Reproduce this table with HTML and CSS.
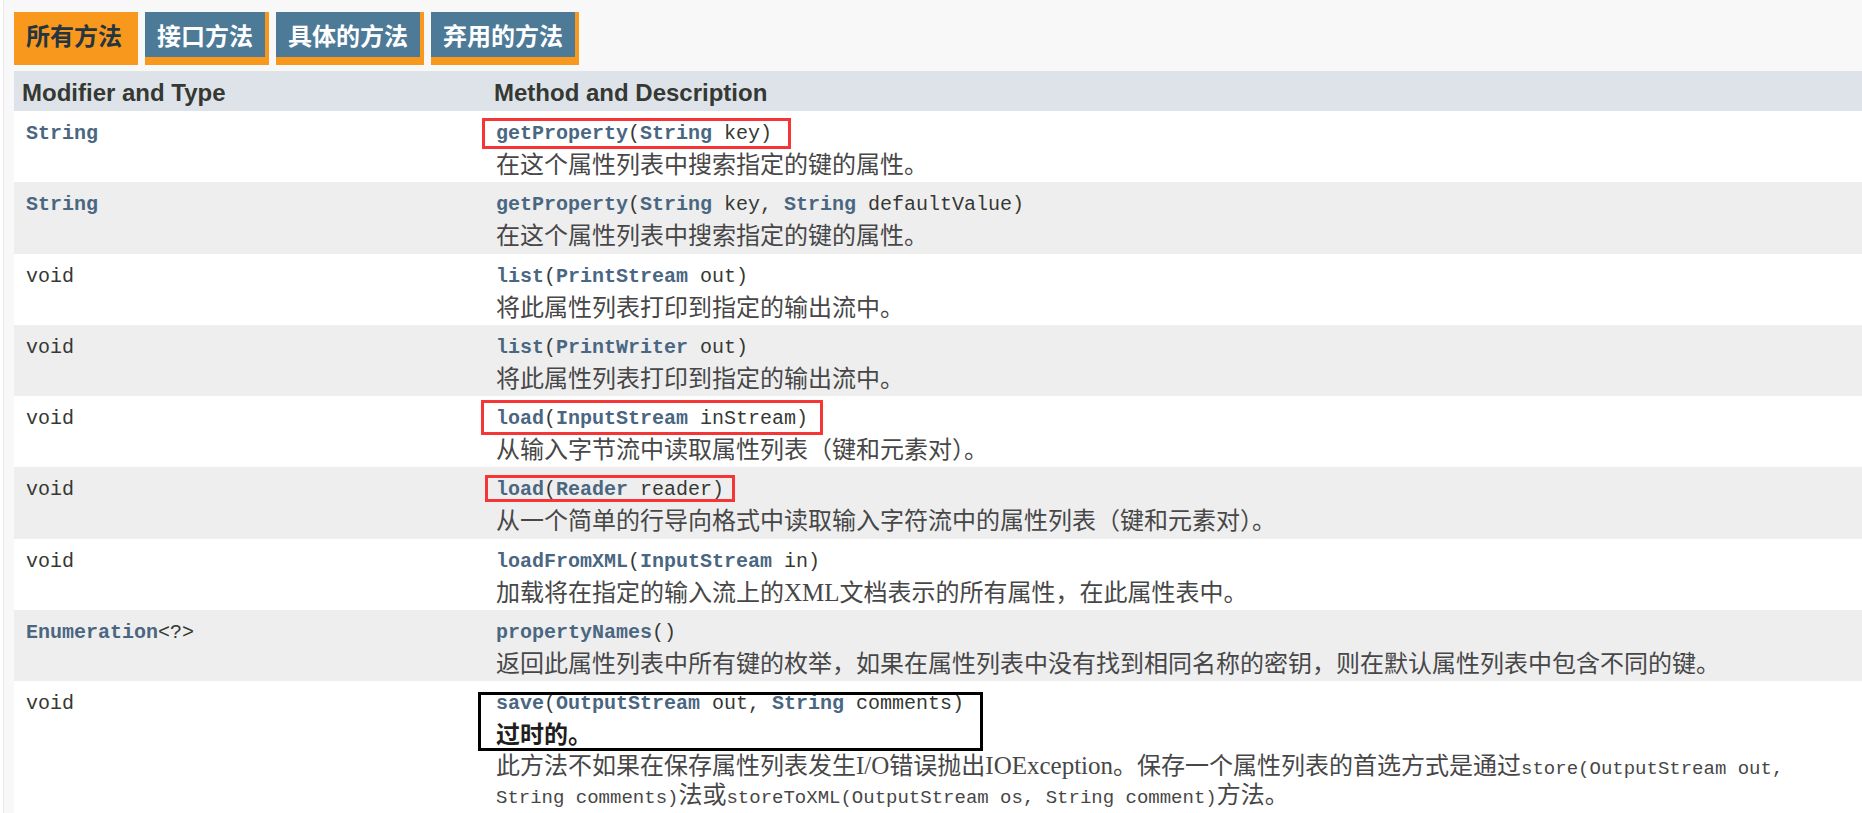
FILE: index.html
```html
<!DOCTYPE html>
<html lang="zh">
<head>
<meta charset="utf-8">
<title>Properties</title>
<link rel="stylesheet" href="styles.css">
</head>
<body>
<div class="page">
  <div class="tabs">
    <span class="tab active"><span class="tab-in">所有方法</span></span>
    <span class="tab"><span class="tab-in">接口方法</span></span>
    <span class="tab"><span class="tab-in">具体的方法</span></span>
    <span class="tab"><span class="tab-in">弃用的方法</span></span>
  </div>
  <table class="summary">
    <colgroup><col class="c1"><col class="c2"></colgroup>
    <thead>
      <tr><th>Modifier and Type</th><th>Method and Description</th></tr>
    </thead>
    <tbody>
      <tr class="alt">
        <td class="first"><code class="link">String</code></td>
        <td class="second">
          <div class="sig"><code><span class="link">getProperty</span>(<span class="link">String</span>&nbsp;key)</code><span class="mark mark-1"></span></div>
          <div class="block">在这个属性列表中搜索指定的键的属性。</div>
        </td>
      </tr>
      <tr class="row">
        <td class="first"><code class="link">String</code></td>
        <td class="second">
          <div class="sig"><code><span class="link">getProperty</span>(<span class="link">String</span>&nbsp;key, <span class="link">String</span>&nbsp;defaultValue)</code></div>
          <div class="block">在这个属性列表中搜索指定的键的属性。</div>
        </td>
      </tr>
      <tr class="alt">
        <td class="first"><code>void</code></td>
        <td class="second">
          <div class="sig"><code><span class="link">list</span>(<span class="link">PrintStream</span>&nbsp;out)</code></div>
          <div class="block">将此属性列表打印到指定的输出流中。</div>
        </td>
      </tr>
      <tr class="row">
        <td class="first"><code>void</code></td>
        <td class="second">
          <div class="sig"><code><span class="link">list</span>(<span class="link">PrintWriter</span>&nbsp;out)</code></div>
          <div class="block">将此属性列表打印到指定的输出流中。</div>
        </td>
      </tr>
      <tr class="alt">
        <td class="first"><code>void</code></td>
        <td class="second">
          <div class="sig"><code><span class="link">load</span>(<span class="link">InputStream</span>&nbsp;inStream)</code><span class="mark mark-2"></span></div>
          <div class="block">从输入字节流中读取属性列表（键和元素对）。</div>
        </td>
      </tr>
      <tr class="row">
        <td class="first"><code>void</code></td>
        <td class="second">
          <div class="sig"><code><span class="link">load</span>(<span class="link">Reader</span>&nbsp;reader)</code><span class="mark mark-3"></span></div>
          <div class="block">从一个简单的行导向格式中读取输入字符流中的属性列表（键和元素对）。</div>
        </td>
      </tr>
      <tr class="alt">
        <td class="first"><code>void</code></td>
        <td class="second">
          <div class="sig"><code><span class="link">loadFromXML</span>(<span class="link">InputStream</span>&nbsp;in)</code></div>
          <div class="block">加载将在指定的输入流上的<span class="latin">XML</span>文档表示的所有属性，在此属性表中。</div>
        </td>
      </tr>
      <tr class="row">
        <td class="first"><code><span class="link">Enumeration</span>&lt;?&gt;</code></td>
        <td class="second">
          <div class="sig"><code><span class="link">propertyNames</span>()</code></div>
          <div class="block">返回此属性列表中所有键的枚举，如果在属性列表中没有找到相同名称的密钥，则在默认属性列表中包含不同的键。</div>
        </td>
      </tr>
      <tr class="alt">
        <td class="first"><code>void</code></td>
        <td class="second">
          <div class="sig"><code><span class="link">save</span>(<span class="link">OutputStream</span>&nbsp;out, <span class="link">String</span>&nbsp;comments)</code><span class="mark mark-black"></span></div>
          <div class="block deprecated">过时的。</div>
          <div class="block">此方法不如果在保存属性列表发生<span class="latin">I/O</span>错误抛出<span class="latin">IOException</span>。保存一个属性列表的首选方式是通过<code>store(OutputStream out, String comments)</code>法或<code>storeToXML(OutputStream os, String comment)</code>方法。</div>
        </td>
      </tr>
    </tbody>
  </table>
</div>
</body>
</html>
```

FILE: styles.css
```css
html {
  overflow: hidden;
}

body {
  margin: 0;
  background: #ffffff;
  color: #353833;
  font-family: "Liberation Sans", Arial, sans-serif;
}

.page {
  margin-left: 3px;
  border-left: 1px solid #e8e8e8;
  background: #f8f8f8;
  padding: 12px 0 0 10px;
  min-height: 813px;
}

.tabs {
  display: flex;
  gap: 7px;
  height: 53px;
}

.tab {
  display: block;
  background: #f8981d;
  padding-bottom: 8px;
}

.tab-in {
  display: block;
  height: 45px;
  margin-right: 4px;
  padding: 0 12px;
  background: #4d7a97;
  color: #ffffff;
  font: bold 24px/45px "Noto Sans CJK SC", sans-serif;
  white-space: nowrap;
}

.tab.active .tab-in {
  background: #f8981d;
  color: #253441;
}

.summary {
  margin-top: 6px;
  width: 100%;
  border-collapse: collapse;
  border-spacing: 0;
  table-layout: fixed;
}

.c1 {
  width: 472px;
}

.summary th {
  background: #dee3e9;
  text-align: left;
  font: bold 24px/28px "Liberation Sans", Arial, sans-serif;
  color: #353833;
  padding: 8px 3px 4px 8px;
}

.summary td {
  vertical-align: top;
  padding: 11px 10px 3.25px 10px;
}

.summary td.first {
  padding-left: 12px;
  line-height: 24px;
}

tr.alt {
  background: #ffffff;
}

tr.row {
  background: #eeeeef;
}

code {
  font-family: "Liberation Mono", "Courier New", monospace;
  font-size: 20px;
  color: #353833;
}

.sig {
  position: relative;
  line-height: 24px;
  white-space: nowrap;
}

.link {
  color: #4a6782;
  font-weight: bold;
}

.block {
  margin: 3px 0 2px 0;
  font: 24px/28px "Noto Sans CJK SC", sans-serif;
  color: #474747;
}

.block code {
  color: #474747;
  font-size: 19px;
  line-height: 1;
}

.latin {
  font-family: "Liberation Serif", "Times New Roman", serif;
  font-size: 25px;
  line-height: 1;
}

.deprecated {
  font-weight: bold;
  color: #1e1e1e;
}

.mark {
  position: absolute;
  box-sizing: border-box;
  border: 3px solid #f63636;
}

.mark-1 {
  left: -14px;
  top: -4px;
  width: 309px;
  height: 31px;
}

.mark-2 {
  left: -15px;
  top: -7px;
  width: 342px;
  height: 35px;
}

.mark-3 {
  left: -11px;
  top: -3px;
  width: 250px;
  height: 27px;
}

.mark-black {
  left: -18px;
  top: 0;
  width: 505px;
  height: 59px;
  border-color: #000000;
}
```
